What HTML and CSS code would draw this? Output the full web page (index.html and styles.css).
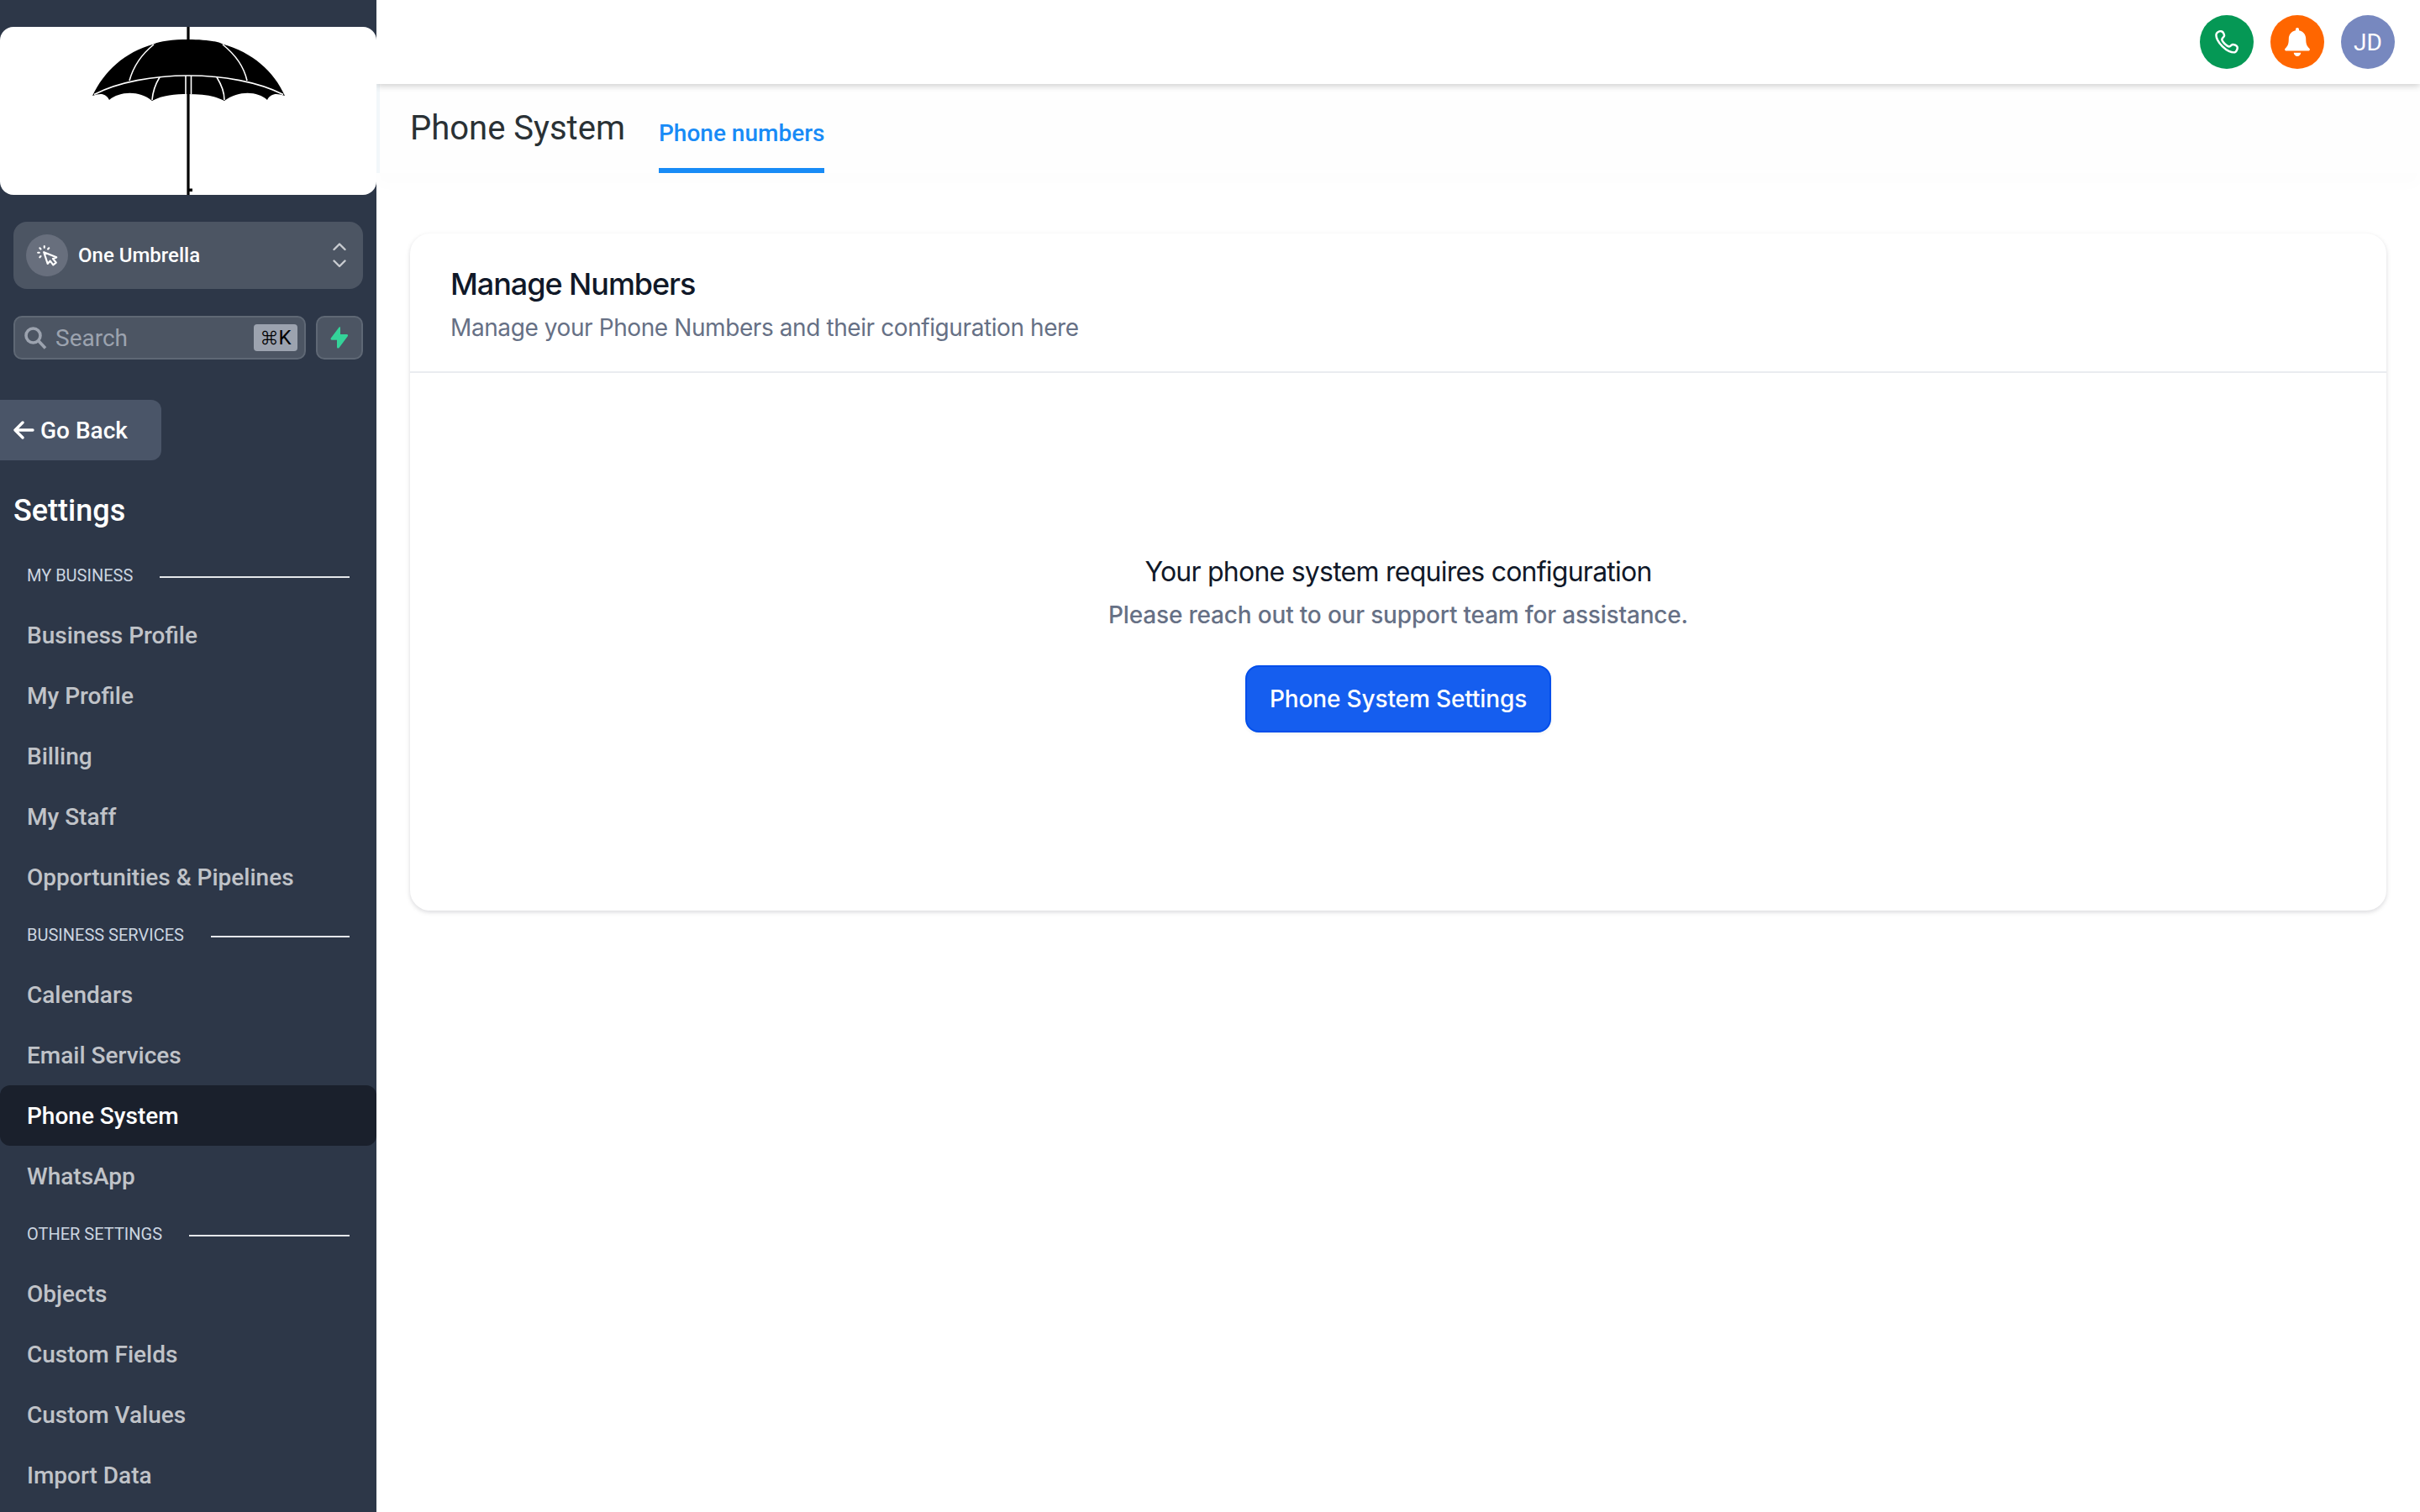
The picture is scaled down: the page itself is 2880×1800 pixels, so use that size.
FILE: index.html
```
<!DOCTYPE html>
<html lang="en">
<head>
    <meta charset="UTF-8">
    <meta name="viewport" content="width=device-width, initial-scale=1.0">
    <title>Phone System</title>
    <link rel="stylesheet" href="styles.css">
</head>
<body>
    <aside class="sidebar">
        <div class="logo">
            <svg width="448" height="200" viewBox="0 0 448 200">
                <path d="M110 82C124 53 148 30 183 20.500C195 13 253 13 265 20.500C300 30 326 53 339 82C329 78.500 322 79 318 87C307 77 285 75 267 88C254 81 240 80 224 80C208 80 194 81 181 88C165 75 142 77 130 87C126 79 120 78.500 110 82Z" fill="#000"/>
                <g fill="none" stroke="#fff" stroke-width="1.600">
                    <path d="M112 80.500C170 50.500 278 50.500 337 80.500"/>
                    <path d="M183 21C168 33 159 46 154 64M265 21C280 33 290 46 294 64"/>
                    <path d="M190 60C185 68 182 76 181 87M258 60C263 68 267 76 267 87M221 58V80M227.500 58V80"/>
                </g>
                <path d="M224 0V15M224 59V200" stroke="#000" stroke-width="3.200"/>
                <path d="M225 192.500h4v3.500h-4z"/>
            </svg>
        </div>

        <div class="location">
            <span class="location-icon">
                <svg width="26" height="26" viewBox="0 0 24 24" fill="none" stroke="#fff" stroke-width="2" stroke-linecap="round" stroke-linejoin="round">
                    <path d="M9 3.500V2M5.060 5.060 4 4M5.060 13 4 14.060M13 5.060 14.060 4M3.500 9H2M8.500 8.500l4.110 12.670 2.840-3.110 3.300 4.440 3.200-2.500-3.500-4.350 3.920-1.460L8.500 8.500z"/>
                </svg>
            </span>
            <span class="location-name">One Umbrella</span>
            <svg width="16" height="30" viewBox="0 0 16 30" fill="none" stroke="#c9ccd1" stroke-width="2.400" stroke-linecap="round" stroke-linejoin="round">
                <path d="M1.500 8 8 1.500 14.500 8M1.500 21.500 8 28l6.500-6.500"/>
            </svg>
        </div>

        <div class="search-row">
            <div class="search">
                <svg width="27" height="27" viewBox="0 0 27 27" fill="none" stroke="#9ca3af" stroke-width="3.600">
                    <circle cx="10.500" cy="10.500" r="8.500"/>
                    <path d="M17 17 25 25.500"/>
                </svg>
                <span class="search-text">Search</span>
                <span class="kbd"><span class="cmd">⌘</span>K</span>
            </div>
            <div class="quick">
                <svg width="22" height="26" viewBox="0 0 22 26" fill="#34d399">
                    <path d="M12 1.200C12.300.200 11 0 10.400.800L.800 13.500C.200 14.500.600 15.800 2 15.800H8V24.200C8 25.800 9.800 26 10.600 24.900L20.800 11.300C21.500 10.300 21 9 19.700 9H12z"/>
                </svg>
            </div>
        </div>

        <div class="go-back">
            <svg width="25" height="22" viewBox="0 0 25 22" fill="none" stroke="#fff" stroke-width="3.400" stroke-linecap="round" stroke-linejoin="round">
                <path d="M11 2 2 11l9 9M2.500 11H23"/>
            </svg>
            <span>Go Back</span>
        </div>

        <h2 class="settings-title">Settings</h2>

        <nav class="menu">
            <div class="menu-section">MY BUSINESS</div>
            <a class="menu-item">Business Profile</a>
            <a class="menu-item">My Profile</a>
            <a class="menu-item">Billing</a>
            <a class="menu-item">My Staff</a>
            <a class="menu-item">Opportunities &amp; Pipelines</a>
            <div class="menu-section">BUSINESS SERVICES</div>
            <a class="menu-item">Calendars</a>
            <a class="menu-item">Email Services</a>
            <a class="menu-item active">Phone System</a>
            <a class="menu-item">WhatsApp</a>
            <div class="menu-section">OTHER SETTINGS</div>
            <a class="menu-item">Objects</a>
            <a class="menu-item">Custom Fields</a>
            <a class="menu-item">Custom Values</a>
            <a class="menu-item">Import Data</a>
        </nav>
    </aside>

    <main class="main">
        <header class="topbar">
            <span class="circle phone">
                <svg width="28" height="28" viewBox="0 0 28 28" fill="none" stroke="#fff" stroke-width="2.500" stroke-linecap="round" stroke-linejoin="round">
                    <path d="M2.300 3.300C3.600 1.800 6.500.700 8.300 1.500C9.800 2.200 11.200 5 11 6.700C10.800 8.300 8.200 9.300 8.300 11C8.500 13.700 14 19.200 16.800 19.500C18.600 19.600 19.400 17.200 21 16.900C22.700 16.700 25.800 18.200 26.500 19.800C27.200 21.500 26 24.500 24.500 25.700C22.700 27 18.500 25.700 16.500 24.800C11.500 22.500 5.300 16.200 3 11.500C2 9.400.900 5 2.300 3.300Z"/>
                </svg>
            </span>
            <span class="circle bell">
                <svg width="30" height="34" viewBox="0 0 30 34" fill="#fff">
                    <path d="M15 0C13.800 0 13 .900 13 2V3.200C8 4.200 4.800 8.200 4.800 13C4.800 19 3.800 21.500.800 24.500C-.600 26 .200 27.600 1.800 27.600H28.200C29.800 27.600 30.600 26 29.200 24.500C26.200 21.500 25.200 19 25.200 13C25.200 8.200 22 4.200 17 3.200V2C17 .900 16.200 0 15 0ZM10.700 29.800C11 32.300 12.800 34 15 34C17.200 34 19 32.300 19.300 29.800Z"/>
                </svg>
            </span>
            <span class="circle avatar">JD</span>
        </header>

        <div class="page-header">
            <h1 class="page-title">Phone System</h1>
            <a class="tab">Phone numbers</a>
        </div>

        <section class="card">
            <div class="card-header">
                <h3>Manage Numbers</h3>
                <p>Manage your Phone Numbers and their configuration here</p>
            </div>
            <div class="card-body">
                <div class="empty-title">Your phone system requires configuration</div>
                <div class="empty-text">Please reach out to our support team for assistance.</div>
                <button class="btn">Phone System Settings</button>
            </div>
        </section>
    </main>
</body>
</html>
```
FILE: styles.css
```
* {
    box-sizing: border-box;
}

body {
    margin: 0;
    height: 1800px;
    display: flex;
    overflow: hidden;
    background: #fff;
    font-family: Roboto, sans-serif;
}

h1, h2, h3, p {
    margin: 0;
}

svg {
    display: block;
    flex-shrink: 0;
}

/* Sidebar */
.sidebar {
    position: relative;
    z-index: 1;
    width: 448px;
    flex-shrink: 0;
    padding-top: 32px;
    background: #2d3748;
    color: #fff;
}

.logo {
    height: 200px;
    background: #fff;
    border-radius: 16px;
    overflow: hidden;
}

.location {
    display: flex;
    align-items: center;
    height: 80px;
    margin: 32px 16px 0;
    padding: 0 20px 0 15px;
    background: #4c5563;
    border-radius: 16px;
}

.location-icon {
    display: flex;
    align-items: center;
    justify-content: center;
    width: 50px;
    height: 50px;
    margin-right: 12px;
    border-radius: 50%;
    background: #686f7d;
}

.location-name {
    flex: 1;
    font-size: 24px;
    font-weight: 500;
}

.search-row {
    display: flex;
    gap: 12px;
    margin: 32px 16px 0;
}

.search {
    flex: 1;
    display: flex;
    align-items: center;
    height: 52px;
    padding: 0 8px 0 11px;
    background: #4c5563;
    border: 2px solid #5f6875;
    border-radius: 10px;
}

.search-text {
    flex: 1;
    margin-left: 10px;
    font-size: 28px;
    color: #9ca3af;
}

.kbd {
    display: flex;
    align-items: center;
    justify-content: center;
    width: 52px;
    height: 32px;
    background: #9ca3af;
    border-radius: 4px;
    color: #000;
    font-size: 24px;
}

.cmd {
    font-family: Inter, sans-serif;
    font-size: 22px;
    font-weight: 300;
}

.quick {
    display: flex;
    align-items: center;
    justify-content: center;
    width: 56px;
    height: 52px;
    background: #4c5563;
    border: 2px solid #5f6875;
    border-radius: 10px;
}

.go-back {
    display: flex;
    align-items: center;
    gap: 7px;
    width: 192px;
    height: 72px;
    margin-top: 48px;
    padding-left: 16px;
    background: #4a5568;
    border-radius: 0 12px 12px 0;
    font-size: 28px;
    font-weight: 500;
}

.settings-title {
    margin: 32px 0 0 16px;
    font-size: 36px;
    line-height: 56px;
    font-weight: 500;
}

.menu {
    margin-top: 16px;
}

.menu-section {
    display: flex;
    align-items: center;
    gap: 32px;
    height: 68px;
    padding: 0 32px 2px;
    font-size: 20px;
    line-height: 24px;
    color: #cbd5e0;
}

.menu-section::after {
    content: "";
    flex: 1;
    height: 2px;
    margin-top: 4px;
    background: #e5e7eb;
}

.menu-item {
    display: block;
    height: 72px;
    padding-left: 32px;
    border-radius: 12px;
    font-size: 28px;
    line-height: 74px;
    font-weight: 500;
    color: #c0c3c8;
}

.menu-item.active {
    background: #1a202c;
    color: #fff;
}

/* Main */
.main {
    flex: 1;
}

.topbar {
    position: relative;
    display: flex;
    align-items: center;
    justify-content: flex-end;
    gap: 20px;
    height: 100px;
    padding-right: 30px;
    background: #fff;
    box-shadow: 0 2px 8px rgba(0, 0, 0, 0.2);
}

.circle {
    display: flex;
    align-items: center;
    justify-content: center;
    width: 64px;
    height: 64px;
    border-radius: 50%;
    color: #fff;
    font-size: 28px;
}

.phone {
    background: #059855;
}

.bell {
    background: #ff6600;
}

.avatar {
    background: #7788bf;
}

.page-header {
    display: flex;
    height: 106px;
    padding-left: 36px;
    border-left: 4px solid #f2f7fa;
    background: #fefefe;
    box-shadow: 0 16px 16px rgba(0, 0, 0, 0.01);
}

.page-title {
    margin-right: 40px;
    font-size: 40px;
    line-height: 106px;
    font-weight: 400;
    color: #2a3135;
}

.tab {
    border-bottom: 6px solid #188bf6;
    font-size: 28px;
    line-height: 118px;
    height: 106px;
    font-weight: 500;
    color: #188bf6;
}

.card {
    height: 806px;
    margin: 72px 40px 0;
    background: #fff;
    border-radius: 24px;
    box-shadow: 0 2px 6px rgba(16, 24, 40, 0.1), 0 2px 4px rgba(16, 24, 40, 0.06);
    font-family: Inter, sans-serif;
}

.card-header {
    height: 166px;
    padding: 32px 48px 0;
    border-bottom: 2px solid #eaecf0;
}

.card-header h3 {
    font-size: 36px;
    line-height: 56px;
    font-weight: 500;
    letter-spacing: -1.05px;
    color: #101828;
}

.card-header p {
    margin-top: 4px;
    font-size: 28px;
    line-height: 40px;
    letter-spacing: -0.41px;
    color: #667085;
}

.card-body {
    display: flex;
    flex-direction: column;
    align-items: center;
    height: 640px;
    padding-top: 209px;
}

.empty-title {
    font-size: 32px;
    line-height: 56px;
    letter-spacing: -0.76px;
    color: #101828;
}

.empty-text {
    margin-top: 3px;
    font-size: 28px;
    line-height: 40px;
    font-weight: 500;
    letter-spacing: -0.18px;
    color: #667085;
}

.btn {
    width: 364px;
    height: 80px;
    margin-top: 40px;
    padding: 0;
    background: #155eef;
    border: 2px solid #004eeb;
    border-radius: 16px;
    box-shadow: 0 2px 4px rgba(16, 24, 40, 0.05);
    color: #fff;
    font-family: Inter, sans-serif;
    font-size: 28px;
    font-weight: 500;
    letter-spacing: -0.13px;
    white-space: nowrap;
}
```
